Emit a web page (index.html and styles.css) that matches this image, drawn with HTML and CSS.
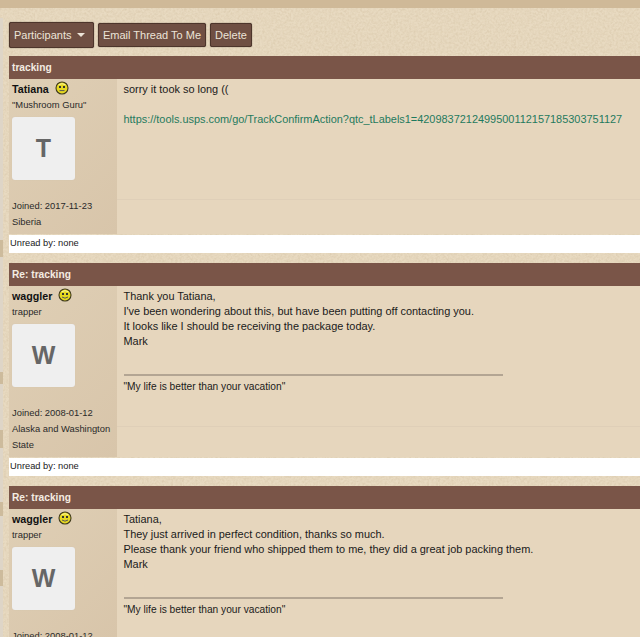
FILE: index.html
```html
<!DOCTYPE html>
<html lang="en">
<head>
<meta charset="utf-8">
<title>tracking</title>
<link rel="stylesheet" href="styles.css">
</head>
<body>
<div class="edge"></div>
<div class="topband"></div>
<main class="thread">
  <div class="actions">
    <button class="btn btn-drop">Participants<span class="caret"></span></button>
    <button class="btn">Email Thread To Me</button>
    <button class="btn">Delete</button>
  </div>

  <section class="post">
    <h2 class="post-title">tracking</h2>
    <div class="post-row post-a">
      <aside class="author">
        <div class="name">Tatiana <svg class="smile" viewBox="0 0 14 14"><circle cx="7" cy="7" r="6" fill="#e6d820" stroke="#3f3a1c" stroke-width="1.1"/><path d="M3.5 3.8q3.5-2.2 7 0" stroke="#fbf59a" fill="none"/><rect x="4" y="5" width="2" height="2" fill="#333"/><rect x="8" y="5" width="2" height="2" fill="#333"/><path d="M4.5 9.6h5" stroke="#555" fill="none"/></svg></div>
        <div class="rank">"Mushroom Guru"</div>
        <div class="avatar">T</div>
        <div class="meta">Joined: 2017-11-23</div>
        <div class="meta">Siberia</div>
      </aside>
      <div class="body">
        <div class="msg">sorry it took so long ((<br><br><a class="link" href="#">https://tools.usps.com/go/TrackConfirmAction?qtc_tLabels1=4209837212499500112157185303751127</a></div>
        <div class="foot foot-a"></div>
      </div>
    </div>
    <div class="unread">Unread by: none</div>
  </section>

  <section class="post">
    <h2 class="post-title">Re: tracking</h2>
    <div class="post-row post-b">
      <aside class="author">
        <div class="name">waggler <svg class="smile" viewBox="0 0 14 14"><circle cx="7" cy="7" r="6" fill="#e6d820" stroke="#3f3a1c" stroke-width="1.1"/><path d="M3.5 3.8q3.5-2.2 7 0" stroke="#fbf59a" fill="none"/><rect x="4" y="5" width="2" height="2" fill="#333"/><rect x="8" y="5" width="2" height="2" fill="#333"/><path d="M4 9q3 2.4 6 0" stroke="#555" fill="none"/></svg></div>
        <div class="rank">trapper</div>
        <div class="avatar">W</div>
        <div class="meta">Joined: 2008-01-12</div>
        <div class="meta">Alaska and Washington State</div>
      </aside>
      <div class="body">
        <div class="msg">Thank you Tatiana,<br>I've been wondering about this, but have been putting off contacting you.<br>It looks like I should be receiving the package today.<br>Mark</div>
        <hr class="sig-rule">
        <div class="sig">"My life is better than your vacation"</div>
        <div class="foot foot-b"></div>
      </div>
    </div>
    <div class="unread">Unread by: none</div>
  </section>

  <section class="post">
    <h2 class="post-title">Re: tracking</h2>
    <div class="post-row post-c">
      <aside class="author">
        <div class="name">waggler <svg class="smile" viewBox="0 0 14 14"><circle cx="7" cy="7" r="6" fill="#e6d820" stroke="#3f3a1c" stroke-width="1.1"/><path d="M3.5 3.8q3.5-2.2 7 0" stroke="#fbf59a" fill="none"/><rect x="4" y="5" width="2" height="2" fill="#333"/><rect x="8" y="5" width="2" height="2" fill="#333"/><path d="M4 9q3 2.4 6 0" stroke="#555" fill="none"/></svg></div>
        <div class="rank">trapper</div>
        <div class="avatar">W</div>
        <div class="meta">Joined: 2008-01-12</div>
      </aside>
      <div class="body">
        <div class="msg">Tatiana,<br>They just arrived in perfect condition, thanks so much.<br>Please thank your friend who shipped them to me, they did a great job packing them.<br>Mark</div>
        <hr class="sig-rule">
        <div class="sig">"My life is better than your vacation"</div>
      </div>
    </div>
  </section>
</main>
</body>
</html>
```
FILE: styles.css
```css
* { box-sizing: border-box; }
html, body { height: 637px; overflow: hidden; }
body {
  margin: 0;
  position: relative;
  font-family: "Liberation Sans", Arial, sans-serif;
  color: #1c1c1c;
  background-color: #e8dac1;
  background-image: url("data:image/svg+xml,%3Csvg xmlns='http://www.w3.org/2000/svg' width='256' height='256'%3E%3Cfilter id='n'%3E%3CfeTurbulence type='fractalNoise' baseFrequency='.45' numOctaves='2' stitchTiles='stitch'/%3E%3CfeColorMatrix values='0 0 0 0 .62 0 0 0 0 .5 0 0 0 0 .33 .55 .55 0 0 -.42'/%3E%3C/filter%3E%3Crect width='256' height='256' filter='url(%23n)'/%3E%3C/svg%3E");
}
.edge {
  position: absolute;
  left: 0;
  top: 18px;
  width: 3px;
  height: 619px;
  background:
    linear-gradient(#cdbb9c, #cdbb9c) 0 222px / 3px 17px no-repeat,
    linear-gradient(#cdbb9c, #cdbb9c) 0 354px / 3px 12px no-repeat,
    linear-gradient(#cdbb9c, #cdbb9c) 0 412px / 3px 18px no-repeat,
    linear-gradient(#cdbb9c, #cdbb9c) 0 484px / 3px 14px no-repeat,
    linear-gradient(#cdbb9c, #cdbb9c) 0 552px / 3px 16px no-repeat,
    #ded5c7;
}
.topband { height: 8px; background: #cfb998; }
.thread { padding-left: 9px; }
.actions { display: flex; align-items: center; gap: 4px; padding: 14px 0 8px; height: 48px; }
.btn {
  height: 24px;
  padding: 0 4px;
  background: #6f4f43;
  color: #ece4d8;
  border: 1px solid #4d352b;
  border-radius: 2px;
  font: 11px "Liberation Sans", Arial, sans-serif;
  white-space: nowrap;
  box-shadow: 0 0 1px #3d2a22;
}
.btn-drop { display: flex; align-items: center; height: 26px; width: 85px; padding: 0 4px; }
.caret {
  margin-left: 6px;
  border-left: 4px solid transparent;
  border-right: 4px solid transparent;
  border-top: 4px solid #ece4d8;
}
.post { margin-bottom: 10px; }
.post-title {
  margin: 0;
  height: 23px;
  padding-left: 3px;
  background: #7a5548;
  color: #f4ece2;
  font-size: 10.2px;
  font-weight: bold;
  line-height: 23px;
}
.post-row { display: flex; background: #e6d6bd; }
.post-a { height: 155px; }
.post-b { height: 171px; }
.post-c { height: 128px; overflow: hidden; }
.author {
  width: 108px;
  flex: none;
  padding: 3px 3px 0;
  background: linear-gradient(135deg, #dfcfb5, #d8c5aa);
  font-size: 9.4px;
}
.name { display: flex; align-items: center; gap: 6px; height: 14px; color: #111; font-size: 10.7px; font-weight: bold; }
.smile { width: 14px; height: 14px; margin-top: -3px; }
.rank { margin-top: 2px; height: 19px; line-height: 13px; color: #2a2a2a; }
.avatar {
  width: 63px;
  height: 63px;
  margin-bottom: 18px;
  border-radius: 3px;
  background: #efefef;
  box-shadow: 0 0 1px #cbbfae;
  color: #666;
  font-size: 25px;
  font-weight: bold;
  line-height: 63px;
  text-align: center;
}
.meta { line-height: 16px; color: #2a2a2a; }
.body { flex: 1; min-width: 0; display: flex; flex-direction: column; padding: 3px 0 0 6.5px; }
.msg { font-size: 10.93px; line-height: 15px; color: #1a1a1a; white-space: nowrap; }
.link { color: #1f7a5e; text-decoration: none; }
.sig-rule { width: 379px; height: 2px; margin: 25px 0 0; border: 0; background: #b3a593; }
.sig { margin-top: 5px; font-size: 10.2px; line-height: 12px; color: #1a1a1a; }
.foot { margin-top: auto; margin-left: -7px; border-top: 1px solid #dfcfb8; }
.foot-a { height: 35px; }
.foot-b { height: 31px; }
.unread {
  height: 18px;
  margin-top: 1px;
  padding-left: 1px;
  background: #fff;
  color: #1a1a1a;
  font-size: 9.3px;
  line-height: 17px;
}
```
